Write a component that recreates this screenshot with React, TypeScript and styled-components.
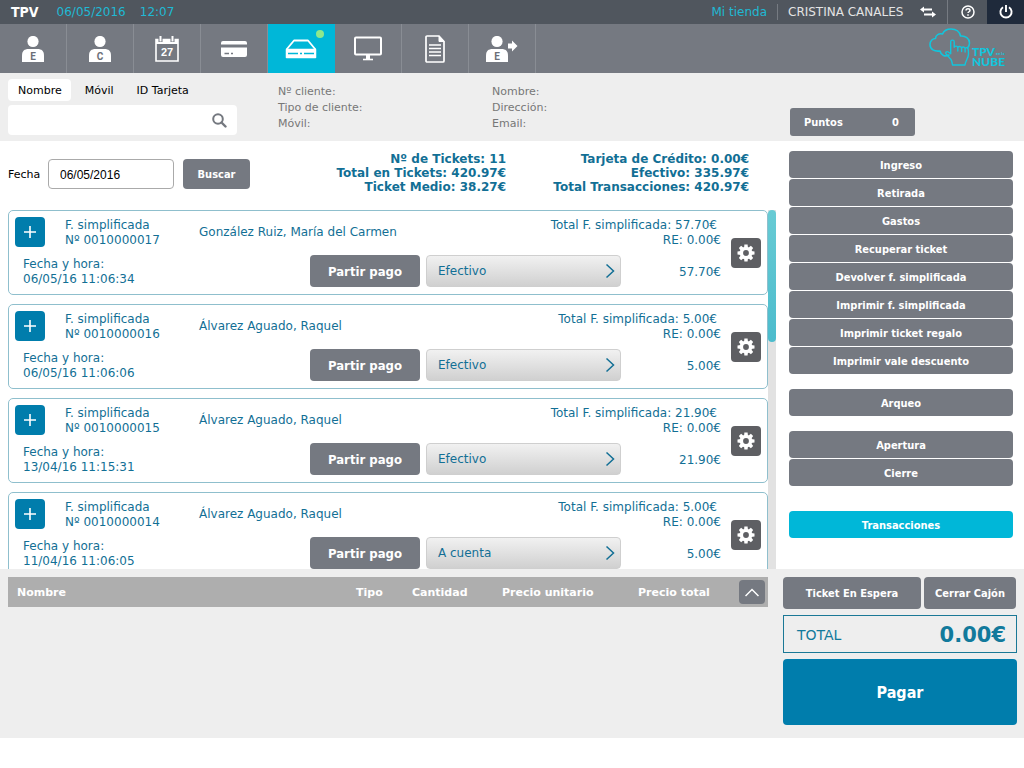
import React from "react";
import styled, { createGlobalStyle } from "styled-components";

const GlobalStyle = createGlobalStyle`
  *, *::before, *::after { box-sizing: border-box; }
  body { margin: 0; background: #fff; font-family: "DejaVu Sans", Verdana, sans-serif; font-size: 12px; color: #000; }
  button, input { font: inherit; color: inherit; margin: 0; padding: 0; border: 0; background: none; }
  button { cursor: pointer; }
  svg { display: block; flex: none; }
`;

const narrowBold = `font-family: "DejaVu Sans Condensed", "DejaVu Sans", Verdana, sans-serif; font-weight: bold;`;

/* ---------- top bar ---------- */
const TopBar = styled.header`
  display: flex;
  align-items: center;
  height: 24px;
  padding-left: 11px;
  background: #50565e;
  color: #20b9d4;
`;
const Brand = styled.strong`
  ${narrowBold}
  font-size: 14px;
  color: #fff;
  margin-right: 18px;
`;
const Clock = styled.time`
  margin-right: 14px;
`;
const Session = styled.div`
  display: flex;
  align-items: center;
  align-self: stretch;
  margin-left: auto;
`;
const StoreLink = styled.a`
  color: inherit;
  text-decoration: none;
  padding-right: 10px;
  line-height: 16px;
  border-right: 1px solid #767b82;
`;
const UserName = styled.span`
  width: 142px;
  padding-left: 10px;
  white-space: nowrap;
  color: #e4e4e4;
`;
const BarButton = styled.button<{ $width: number; $dark?: boolean; $divided?: boolean }>`
  display: flex;
  align-items: center;
  justify-content: center;
  align-self: stretch;
  width: ${(p) => p.$width}px;
  color: #fff;
  background: ${(p) => (p.$dark ? "#1f2a3b" : "transparent")};
  border-left: ${(p) => (p.$divided ? "1px solid #767b82" : "0")};
`;
const SwapButton = styled(BarButton)`
  margin-right: 11px;
`;

/* ---------- main navigation ---------- */
const Nav = styled.nav`
  display: flex;
  height: 49px;
  background: #757981;
  padding-right: 15px;
`;
const NavButton = styled.button<{ $active?: boolean }>`
  position: relative;
  display: flex;
  align-items: center;
  justify-content: center;
  width: 67px;
  color: #fff;
  background: ${(p) => (p.$active ? "#00b7d8" : "transparent")};
  border-right: 1px solid ${(p) => (p.$active ? "#00b7d8" : "#898d94")};
`;
const StatusDot = styled.span`
  position: absolute;
  top: 6px;
  right: 10px;
  width: 8px;
  height: 8px;
  border-radius: 50%;
  background: #8fe88c;
`;
const LogoLink = styled.a`
  margin: 4px 0 0 auto;
`;

/* ---------- customer ---------- */
const Customer = styled.section`
  display: flex;
  height: 68px;
  padding: 6px 109px 5px 8px;
  background: #eee;
`;
const SearchPanel = styled.div`
  width: 229px;
  margin-right: 41px;
`;
const Tabs = styled.div`
  display: flex;
  gap: 4px;
  margin-bottom: 4px;
`;
const Tab = styled.button<{ $active?: boolean }>`
  height: 22px;
  padding: 0 9px 0 10px;
  font-size: 11px;
  border-radius: 4px;
  background: ${(p) => (p.$active ? "#fff" : "transparent")};
`;
const SearchBox = styled.form`
  display: flex;
  align-items: center;
  height: 30px;
  padding: 0 10px;
  background: #fff;
  border-radius: 4px;
`;
const SearchInput = styled.input`
  flex: 1;
  min-width: 0;
  outline: 0;
`;
const IconButton = styled.button`
  color: #74787f;
`;
const Facts = styled.ul`
  width: 214px;
  margin: 5px 0 0;
  padding: 0;
  list-style: none;
  font-size: 11px;
  line-height: 16px;
  color: #777;
`;
const Points = styled.button`
  ${narrowBold}
  display: flex;
  align-items: center;
  justify-content: space-between;
  align-self: flex-end;
  width: 125px;
  height: 28px;
  margin-left: auto;
  padding: 0 16px 0 14px;
  font-size: 11px;
  color: #fff;
  background: #757981;
  border-radius: 3px;
`;

/* ---------- ticket list ---------- */
const Main = styled.main`
  display: flex;
`;
const Tickets = styled.section`
  flex: 1;
  min-width: 0;
  padding: 11px 0 0 8px;
`;
const Filter = styled.form`
  display: flex;
  align-items: flex-start;
  height: 58px;
  padding-right: 27px;
  font-size: 11px;
`;
const FilterLabel = styled.label`
  width: 40px;
  line-height: 30px;
  margin-top: 8px;
`;
const DateInput = styled.input`
  width: 126px;
  height: 30px;
  margin-top: 7px;
  padding: 1px 11px 0;
  font-family: "Liberation Sans", Arial, sans-serif;
  font-size: 12px;
  border: 1px solid #aaa;
  border-radius: 4px;
`;
const GreyButton = styled.button<{ $height: number; $size?: number }>`
  ${narrowBold}
  height: ${(p) => p.$height}px;
  padding-top: 1px;
  font-size: ${(p) => p.$size ?? 11}px;
  color: #fff;
  background: #757981;
  border-radius: 4px;
`;
const SearchButton = styled(GreyButton)`
  width: 67px;
  margin: 7px 0 0 9px;
`;
const Summary = styled.div`
  flex: 1;
  text-align: right;
  font-size: 12px;
  font-weight: bold;
  line-height: 14px;
  white-space: nowrap;
  color: #126f95;
  & + & { flex: none; width: 243px; }
`;
const Scroller = styled.div`
  display: flex;
  height: 359px;
  overflow: hidden;
`;
const TicketList = styled.ul`
  flex: 1;
  display: flex;
  flex-direction: column;
  gap: 9px;
  margin: 0;
  padding: 0;
  list-style: none;
  color: #126f95;
`;
const Track = styled.div`
  width: 8px;
  background: #e2e2e2;
`;
const Thumb = styled.div`
  height: 132px;
  border-radius: 4px;
  background: linear-gradient(#68cbd4, #4cbccd);
`;
const Card = styled.li`
  display: flex;
  align-items: center;
  gap: 10px;
  flex: none;
  padding: 6px 6px 7px;
  border: 1px solid #8fbfcd;
  border-radius: 5px;
`;
const CardBody = styled.div`
  flex: 1;
  display: grid;
  grid-template-rows: 30px 32px;
  gap: 8px;
  line-height: 15px;
`;
const CardRow = styled.div`
  display: flex;
  align-items: center;
`;
const AddButton = styled.button`
  display: flex;
  align-items: center;
  justify-content: center;
  width: 30px;
  height: 30px;
  margin-right: 20px;
  color: #fff;
  background: #007dac;
  border-radius: 4px;
`;
const TicketId = styled.div`
  width: 134px;
  padding-top: 2px;
`;
const Amounts = styled.div`
  margin-left: auto;
  padding-top: 2px;
  text-align: right;
`;
const AmountLine = styled.div`
  padding-right: 4px;
`;
const Issued = styled.div`
  flex: 1;
  padding: 2px 0 0 8px;
`;
const SplitButton = styled(GreyButton)`
  width: 110px;
  margin-right: 6px;
`;
const MethodButton = styled.button`
  display: flex;
  align-items: center;
  justify-content: space-between;
  width: 195px;
  height: 32px;
  padding: 0 5px 0 11px;
  border: 1px solid #cfcfcf;
  border-radius: 4px;
  background: linear-gradient(#f1f1f1, #d0d0d0);
`;
const Paid = styled.div`
  width: 100px;
  padding-top: 2px;
  text-align: right;
`;
const GearButton = styled.button`
  display: flex;
  align-items: center;
  justify-content: center;
  width: 30px;
  height: 30px;
  margin-top: 2px;
  color: #fff;
  background: #5e5f63;
  border-radius: 4px;
`;

/* ---------- actions ---------- */
const Actions = styled.aside`
  display: flex;
  flex-direction: column;
  gap: 15px;
  width: 248px;
  padding: 10px 11px 0 13px;
`;
const ActionGroup = styled.div`
  display: grid;
  gap: 1px;
`;
const ActionButton = styled(GreyButton)<{ $active?: boolean }>`
  padding-top: 2px;
  background: ${(p) => (p.$active ? "#00b7d8" : "#757981")};
  margin-top: ${(p) => (p.$active ? 10 : 0)}px;
`;

/* ---------- current sale ---------- */
const Sale = styled.footer`
  display: flex;
  align-items: flex-start;
  gap: 15px;
  padding: 8px 7px 13px 8px;
  background: #eee;
`;
const Lines = styled.table`
  flex: 1;
  table-layout: fixed;
  border-collapse: collapse;
  background: #aeaeae;
  color: #fff;
`;
const Heading = styled.th<{ $width?: number }>`
  width: ${(p) => (p.$width ? p.$width + "px" : "auto")};
  height: 30px;
  padding: 0;
  text-align: left;
  font-size: 11px;
  white-space: nowrap;
  &:first-child { padding-left: 9px; }
`;
const CollapseButton = styled.button`
  display: flex;
  align-items: center;
  justify-content: center;
  width: 26px;
  height: 24px;
  color: #fff;
  background: #757981;
  border-radius: 4px;
`;
const Checkout = styled.div`
  display: grid;
  gap: 6px;
  width: 234px;
`;
const CheckoutRow = styled.div`
  display: grid;
  grid-template-columns: 138px 1fr;
  gap: 3px;
  padding-right: 1px;
`;
const Total = styled.div`
  display: flex;
  align-items: center;
  justify-content: space-between;
  height: 38px;
  padding: 2px 10px 0 13px;
  border: 1px solid #1a7896;
  color: #127a9c;
  font-size: 14px;
`;
const TotalAmount = styled.strong`
  font-size: 21px;
`;
const PayButton = styled.button`
  ${narrowBold}
  height: 66px;
  font-size: 16px;
  color: #fff;
  background: #007dac;
  border-radius: 4px;
`;

/* ---------- icons ---------- */
const PersonIcon = ({ letter, arrow }: { letter: string; arrow?: boolean }) => (
  <svg width={arrow ? 32 : 22} height="26" viewBox={arrow ? "0 0 32 26" : "0 0 22 26"} fill="currentColor" aria-hidden="true">
    <circle cx="11" cy="5.500" r="5.600" />
    <path d="M0 26v-6.500C0 15 2.500 13 6.500 13h9c4 0 6.500 2 6.500 6.500V26z" />
    <text x="11" y="24" textAnchor="middle" fontFamily="Roboto, sans-serif" fontWeight="bold" fontSize="10" fill="#6b6f77">{letter}</text>
    {arrow && <path d="M22 7.500h4V4.500l5.500 5.500-5.500 5.500v-3h-4z" />}
  </svg>
);
const CalendarIcon = () => (
  <svg width="24" height="26" viewBox="0 0 24 26" aria-hidden="true">
    <path d="M1 3.500h22v21.500H1z" fill="none" stroke="currentColor" strokeWidth="1.600" />
    <path d="M1 3h22v5H1z" fill="currentColor" />
    <path d="M5.500 0v6M17.500 0v6" stroke="#757981" strokeWidth="4" />
    <path d="M5.500 0v5.500M17.500 0v5.500" stroke="currentColor" strokeWidth="2" />
    <text x="12" y="20" textAnchor="middle" fontFamily="Liberation Sans, sans-serif" fontWeight="bold" fontSize="11" fill="currentColor">27</text>
  </svg>
);
const CardIcon = () => (
  <svg width="26" height="18" viewBox="0 0 26 18" aria-hidden="true">
    <path d="M2 1h22a2 2 0 0 1 2 2v1.500H0V3a2 2 0 0 1 2-2zM0 7.500h26V15a2 2 0 0 1-2 2H2a2 2 0 0 1-2-2z" fill="currentColor" />
    <path d="M3.500 13.500H8M10 13.500h2" stroke="#757981" strokeWidth="1.300" />
  </svg>
);
const DrawerIcon = () => (
  <svg width="32" height="20" viewBox="0 0 32 20" aria-hidden="true">
    <path d="M1.500 10.500 9 1.500h14l7.500 9" fill="none" stroke="currentColor" strokeWidth="1.800" strokeLinejoin="round" />
    <path d="M1.500 10.500h29v8h-29z" fill="currentColor" stroke="currentColor" strokeWidth="1.500" strokeLinejoin="round" />
    <path d="M3 14.500h10M19 14.500h10M15 14.500h2" stroke="#00b7d8" strokeWidth="1.400" />
  </svg>
);
const MonitorIcon = () => (
  <svg width="28" height="25" viewBox="0 0 28 25" fill="none" stroke="currentColor" aria-hidden="true">
    <rect x="1" y="1.500" width="26" height="17" rx="1" strokeWidth="2" />
    <path d="M14 19v4" strokeWidth="4" />
    <path d="M9 23.500h10" strokeWidth="1.600" />
  </svg>
);
const DocumentIcon = () => (
  <svg width="20" height="28" viewBox="0 0 20 28" fill="none" stroke="currentColor" aria-hidden="true">
    <path d="M1 2a1 1 0 0 1 1-1h12l5 5.500V26a1 1 0 0 1-1 1H2a1 1 0 0 1-1-1z" strokeWidth="1.700" />
    <path d="M14 1v5.500h5z" fill="currentColor" />
    <path d="M4 10h12M4 13.500h12M4 17h12M4 20.500h12" strokeWidth="1.400" />
  </svg>
);
const SwapIcon = () => (
  <svg width="16" height="12" viewBox="0 0 16 12" aria-hidden="true">
    <path d="M3 3.500h9M4 8.500h9" stroke="currentColor" strokeWidth="1.800" />
    <path d="M4 .5v6L0 3.500zM12 5.500v6l4-3z" fill="currentColor" />
  </svg>
);
const HelpIcon = () => (
  <svg width="14" height="14" viewBox="0 0 14 14" fill="none" stroke="currentColor" strokeWidth="1.500" aria-hidden="true">
    <circle cx="7" cy="7" r="6" />
    <path d="M5 5.600C5 4.300 5.900 3.700 7 3.700s2 .7 2 1.700c0 1.300-2 1.400-2 2.700M7 9.300v1.500" />
  </svg>
);
const PowerIcon = () => (
  <svg width="14" height="14" viewBox="0 0 14 14" fill="none" stroke="currentColor" strokeWidth="1.900" aria-hidden="true">
    <path d="M4 2.200a5.600 5.600 0 1 0 6 0M7 0v7" />
  </svg>
);
const SearchIcon = () => (
  <svg width="15" height="15" viewBox="0 0 15 15" fill="none" stroke="currentColor" aria-hidden="true">
    <circle cx="6" cy="6" r="4.800" strokeWidth="2" />
    <path d="m9.500 9.500 4 4" strokeWidth="2.400" strokeLinecap="round" />
  </svg>
);
const PlusIcon = () => (
  <svg width="12" height="12" viewBox="0 0 12 12" stroke="currentColor" strokeWidth="1.600" aria-hidden="true">
    <path d="M6 0v12M0 6h12" />
  </svg>
);
const ChevronIcon = () => (
  <svg width="10" height="16" viewBox="0 0 10 16" fill="none" stroke="#126f95" strokeWidth="1.500" aria-hidden="true">
    <path d="m1.500 1.500 7 6.500-7 6.500" />
  </svg>
);
const UpIcon = () => (
  <svg width="14" height="9" viewBox="0 0 14 9" fill="none" stroke="currentColor" strokeWidth="1.500" aria-hidden="true">
    <path d="m.5 8 6.500-6.500L13.500 8" />
  </svg>
);
const teeth = [0, 45, 90, 135, 180, 225, 270, 315];
const GearIcon = () => (
  <svg width="18" height="18" viewBox="-9 -9 18 18" aria-hidden="true">
    {teeth.map((angle) => (
      <path key={angle} d="M-2-5-1.600-8.500h3.200L2-5z" fill="currentColor" transform={`rotate(${angle})`} />
    ))}
    <circle r="4.600" fill="none" stroke="currentColor" strokeWidth="3.400" />
  </svg>
);
const Logo = () => (
  <svg width="80" height="40" viewBox="0 0 80 40" fill="none" stroke="#12c5dc" strokeWidth="1.600" strokeLinejoin="round" strokeLinecap="round" role="img" aria-label="TPV en la nube">
    <path d="M20 27c-4 2-8 .5-9-4-5.500.8-10-1.500-10-6.500C1 12.500 4 10.500 6.500 10.500 6.500 7 10 5 13.500 6 15 2.500 18 1 22 1c5 0 8.500 2.500 9.500 7 5-.5 9 2.500 9 7 0 2-.7 3.700-2 5" />
    <path d="M23.500 37h12.500c.3-4 3.500-7 3.500-11 0-2 0-4-.5-5.500-.5-1.300-2.700-1.200-2.900.3-.2-2.300-3.200-2.500-3.500-.4-.3-2.400-3.500-2.500-3.800-.3M28.800 23v-3.400c-.3-1.900-3-2-3.600-.3v-5.500c0-2.300-3.500-2.300-3.500 0v12l-2.500-1.800c-1.800-1-3 .5-2.200 1.900l5 5.600c1 1.500 1.200 3.500 1.500 5.500M32.600 23.500v-3M36.100 24v-3" strokeWidth="1.400" />
    <g fill="#12c5dc" stroke="none" fontFamily="Lato, sans-serif" fontWeight="900">
      <text x="43" y="28" fontSize="12">TPV</text>
      <text x="67" y="27" fontSize="4">en la</text>
      <text x="43" y="38" fontSize="12">NUBE</text>
    </g>
  </svg>
);

/* ---------- data ---------- */
const tickets = [
  { id: "0010000017", name: "González Ruiz, María del Carmen", total: "57.70€", date: "06/05/16 11:06:34", method: "Efectivo" },
  { id: "0010000016", name: "Álvarez Aguado, Raquel", total: "5.00€", date: "06/05/16 11:06:06", method: "Efectivo" },
  { id: "0010000015", name: "Álvarez Aguado, Raquel", total: "21.90€", date: "13/04/16 11:15:31", method: "Efectivo" },
  { id: "0010000014", name: "Álvarez Aguado, Raquel", total: "5.00€", date: "11/04/16 11:06:05", method: "A cuenta" },
];
const actionGroups = [
  ["Ingreso", "Retirada", "Gastos", "Recuperar ticket", "Devolver f. simplificada", "Imprimir f. simplificada", "Imprimir ticket regalo", "Imprimir vale descuento"],
  ["Arqueo"],
  ["Apertura", "Cierre"],
  ["Transacciones"],
];

export default function App() {
  return (
    <>
      <GlobalStyle />
      <TopBar>
        <Brand>TPV</Brand>
        <Clock>06/05/2016</Clock>
        <Clock>12:07</Clock>
        <Session>
          <StoreLink href="#tienda">Mi tienda</StoreLink>
          <UserName>CRISTINA CANALES</UserName>
          <SwapButton $width={16} aria-label="Cambiar usuario"><SwapIcon /></SwapButton>
          <BarButton $width={40} $divided aria-label="Ayuda"><HelpIcon /></BarButton>
          <BarButton $width={37} $dark aria-label="Salir"><PowerIcon /></BarButton>
        </Session>
      </TopBar>
      <Nav>
        <NavButton aria-label="Empleados"><PersonIcon letter="E" /></NavButton>
        <NavButton aria-label="Clientes"><PersonIcon letter="C" /></NavButton>
        <NavButton aria-label="Agenda"><CalendarIcon /></NavButton>
        <NavButton aria-label="Tarjetas"><CardIcon /></NavButton>
        <NavButton $active aria-label="Caja"><DrawerIcon /><StatusDot /></NavButton>
        <NavButton aria-label="Pantalla"><MonitorIcon /></NavButton>
        <NavButton aria-label="Informes"><DocumentIcon /></NavButton>
        <NavButton aria-label="Salida de empleado"><PersonIcon letter="E" arrow /></NavButton>
        <LogoLink href="#inicio"><Logo /></LogoLink>
      </Nav>
      <Customer>
        <SearchPanel>
          <Tabs>
            <Tab $active>Nombre</Tab>
            <Tab>Móvil</Tab>
            <Tab>ID Tarjeta</Tab>
          </Tabs>
          <SearchBox>
            <SearchInput type="text" aria-label="Buscar cliente" />
            <IconButton type="button" aria-label="Buscar"><SearchIcon /></IconButton>
          </SearchBox>
        </SearchPanel>
        <Facts><li>Nº cliente:</li><li>Tipo de cliente:</li><li>Móvil:</li></Facts>
        <Facts><li>Nombre:</li><li>Dirección:</li><li>Email:</li></Facts>
        <Points><span>Puntos</span><span>0</span></Points>
      </Customer>
      <Main>
        <Tickets>
          <Filter>
            <FilterLabel htmlFor="fecha">Fecha</FilterLabel>
            <DateInput id="fecha" type="text" defaultValue="06/05/2016" />
            <SearchButton type="button" $height={30}>Buscar</SearchButton>
            <Summary>
              <div>Nº de Tickets: 11</div>
              <div>Total en Tickets: 420.97€</div>
              <div>Ticket Medio: 38.27€</div>
            </Summary>
            <Summary>
              <div>Tarjeta de Crédito: 0.00€</div>
              <div>Efectivo: 335.97€</div>
              <div>Total Transacciones: 420.97€</div>
            </Summary>
          </Filter>
          <Scroller>
            <TicketList>
              {tickets.map((t) => (
                <Card key={t.id}>
                  <CardBody>
                    <CardRow>
                      <AddButton aria-label="Ver detalle"><PlusIcon /></AddButton>
                      <TicketId>
                        <div>F. simplificada</div>
                        <div>Nº {t.id}</div>
                      </TicketId>
                      <span>{t.name}</span>
                      <Amounts>
                        <AmountLine>Total F. simplificada: {t.total}</AmountLine>
                        <div>RE: 0.00€</div>
                      </Amounts>
                    </CardRow>
                    <CardRow>
                      <Issued>
                        <div>Fecha y hora:</div>
                        <div>{t.date}</div>
                      </Issued>
                      <SplitButton $height={32} $size={13}>Partir pago</SplitButton>
                      <MethodButton>{t.method}<ChevronIcon /></MethodButton>
                      <Paid>{t.total}</Paid>
                    </CardRow>
                  </CardBody>
                  <GearButton aria-label="Opciones"><GearIcon /></GearButton>
                </Card>
              ))}
            </TicketList>
            <Track><Thumb /></Track>
          </Scroller>
        </Tickets>
        <Actions>
          {actionGroups.map((group) => (
            <ActionGroup key={group[0]}>
              {group.map((label) => (
                <ActionButton key={label} $height={27} $active={label === "Transacciones"}>{label}</ActionButton>
              ))}
            </ActionGroup>
          ))}
        </Actions>
      </Main>
      <Sale>
        <Lines>
          <thead>
            <tr>
              <Heading>Nombre</Heading>
              <Heading $width={56}>Tipo</Heading>
              <Heading $width={90}>Cantidad</Heading>
              <Heading $width={136}>Precio unitario</Heading>
              <Heading $width={101}>Precio total</Heading>
              <Heading $width={29}><CollapseButton aria-label="Plegar"><UpIcon /></CollapseButton></Heading>
            </tr>
          </thead>
        </Lines>
        <Checkout>
          <CheckoutRow>
            <GreyButton $height={32}>Ticket En Espera</GreyButton>
            <GreyButton $height={32}>Cerrar Cajón</GreyButton>
          </CheckoutRow>
          <Total><span>TOTAL</span><TotalAmount>0.00€</TotalAmount></Total>
          <PayButton>Pagar</PayButton>
        </Checkout>
      </Sale>
    </>
  );
}
